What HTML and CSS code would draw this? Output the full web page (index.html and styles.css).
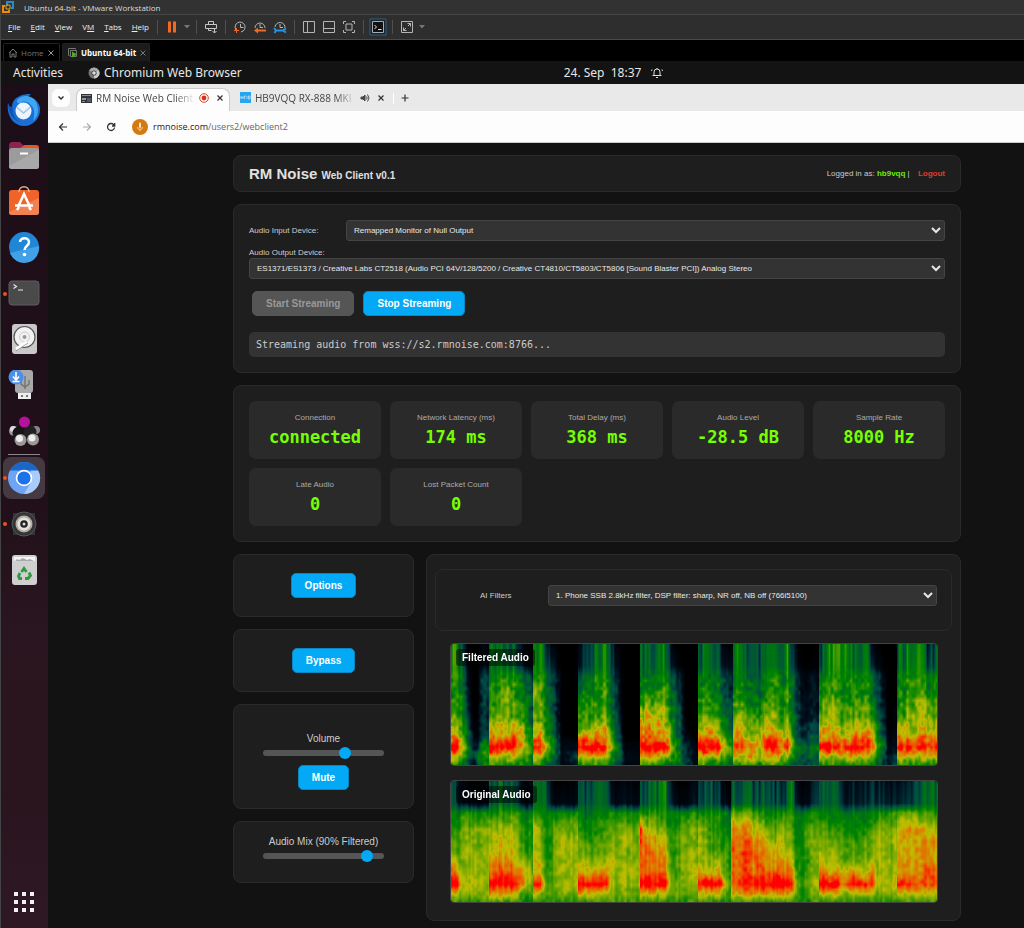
FILE: index.html
```html
<!DOCTYPE html>
<html lang="en">
<head>
    <meta charset="UTF-8">
    <meta name="viewport" content="width=device-width, initial-scale=1">
    <title>RM Noise Web Client</title>
    <link rel="stylesheet" href="styles.css">
</head>
<body>

<div class="vm-window">

    <!-- VMware title, menu and tabs -->
    <div class="vm-title">
        <svg width="12" height="12" viewBox="0 0 12 12" fill="none" stroke-width="2">
            <path d="M5 5V1h6v6H9" stroke="#1a8fd1"/>
            <path d="M3 5H1v6h6V9" stroke="#f38b00"/>
            <path d="M4 4h4v4H4z" stroke="#e0a030" stroke-width="1"/>
        </svg>
        <span>Ubuntu 64-bit - VMware Workstation</span>
    </div>

    <div class="vm-toolbar">
        <nav class="vm-menu">
            <button><u>F</u>ile</button>
            <button><u>E</u>dit</button>
            <button><u>V</u>iew</button>
            <button>V<u>M</u></button>
            <button><u>T</u>abs</button>
            <button><u>H</u>elp</button>
        </nav>
        <span class="sep"></span>
        <button class="tool" aria-label="Pause"><svg width="14" height="14" viewBox="0 0 14 14"><path d="M3 1.500h3v11H3zM8 1.500h3v11H8z" fill="#f26a21"/></svg></button>
        <button class="caret" aria-label="Power menu"><svg width="6" height="4" viewBox="0 0 6 4"><path d="M0 0h6L3 3.500z" fill="#777"/></svg></button>
        <span class="sep"></span>
        <button class="tool" aria-label="Send keys"><svg width="14" height="14" viewBox="0 0 14 14" fill="none" stroke="#c8c8c8"><path d="M4.500 1.500h5v3h-5zM1.500 4.500h11v4h-11zM4.500 8.500v2h3M10.500 8v5M8.500 11l2 2 2-2"/></svg></button>
        <span class="sep"></span>
        <button class="tool" aria-label="Take snapshot"><svg width="14" height="14" viewBox="0 0 14 14" fill="none" stroke="#b4b4b4"><path d="M3 10a5 5 0 1 1 5 2M7.500 4v3.500h3"/><path d="M1 10.500h5M3.500 8v5" stroke="#f26a21"/></svg></button>
        <button class="tool" aria-label="Revert snapshot"><svg width="14" height="14" viewBox="0 0 14 14" fill="none" stroke="#b4b4b4"><path d="M2 8a5 5 0 1 1 10 0M7 4v3.500h3"/><path d="M13 10.500H4" stroke="#f26a21" stroke-width="2"/><path d="M1 10.500L5 7.500v6z" fill="#f26a21" stroke="none"/></svg></button>
        <button class="tool" aria-label="Manage snapshots"><svg width="14" height="14" viewBox="0 0 14 14" fill="none" stroke="#b4b4b4"><path d="M2 7a5 5 0 1 1 10 1M7 4v3.500h3"/><path d="M1 8l2 2.500L1.500 13M3 10.500h7M13 8.500l-3 2 3 2" stroke="#2196e8" stroke-width="2"/></svg></button>
        <span class="sep"></span>
        <button class="tool" aria-label="Library"><svg width="14" height="14" viewBox="0 0 14 14" fill="none" stroke="#b4b4b4"><path d="M1.500 1.500h11v11h-11zM5.500 1.500v11"/></svg></button>
        <button class="tool" aria-label="Thumbnail bar"><svg width="14" height="14" viewBox="0 0 14 14" fill="none" stroke="#b4b4b4"><path d="M1.500 1.500h11v11h-11zM1.500 8.500h11"/></svg></button>
        <button class="tool" aria-label="Stretch guest"><svg width="14" height="14" viewBox="0 0 14 14" fill="none" stroke="#b4b4b4"><path d="M4 4h6v6H4zM1.500 4V1.500H4M10 1.500h2.500V4M12.500 10v2.500H10M4 12.500H1.500V10"/></svg></button>
        <span class="sep"></span>
        <button class="tool" aria-label="Console view"><svg width="18" height="18" viewBox="0 0 18 18" fill="none" stroke="#e0e0e0"><path d="M1 1h16v16H1z" fill="#1c252c" stroke="#2a5f87"/><path d="M3.500 3.500h11v11h-11z" fill="#111" stroke="#aaa"/><path d="M5.500 7l2 2-2 2M9 11.500h3.500"/></svg></button>
        <span class="sep"></span>
        <button class="tool" aria-label="Full screen"><svg width="14" height="14" viewBox="0 0 14 14" fill="none" stroke="#b4b4b4"><path d="M1.500 1.500h11v11h-11zM7.500 3.500h3v3M10.500 3.500L8 6M6.500 10.500h-3v-3M3.500 10.500L6 8"/></svg></button>
        <button class="caret" aria-label="Screen menu"><svg width="6" height="4" viewBox="0 0 6 4"><path d="M0 0h6L3 3.500z" fill="#777"/></svg></button>
    </div>

    <div class="vm-tabs">
        <div class="vm-tab">
            <svg width="10" height="10" viewBox="0 0 10 10" fill="none" stroke="#777"><path d="M1 5l4-4 4 4M2 4v5h2V6h2v3h2V4"/></svg>
            <span>Home</span>
            <button aria-label="Close Home"><svg width="8" height="8" viewBox="0 0 8 8" stroke="#999"><path d="M1.500 1.500l5 5M6.500 1.500l-5 5"/></svg></button>
        </div>
        <div class="vm-tab active">
            <svg width="11" height="11" viewBox="0 0 11 11" fill="none" stroke="#777"><path d="M2.500 8.500h-1v-7h7v1M3.500 3.500h6v6h-6z"/><path d="M5 4.500v6l5-3z" fill="#4faf1c" stroke="none"/></svg>
            <span>Ubuntu 64-bit</span>
            <button aria-label="Close Ubuntu 64-bit"><svg width="8" height="8" viewBox="0 0 8 8" stroke="#777"><path d="M1.500 1.500l5 5M6.500 1.500l-5 5"/></svg></button>
        </div>
    </div>

    <!-- GNOME top bar -->
    <div class="gnome-bar">
        <button>Activities</button>
        <button class="app-name">
            <svg width="12" height="12" viewBox="0 0 12 12"><circle cx="6" cy="6" r="5.500" fill="#777"/><path d="M6 6L1.200 3.200A5.500 5.500 0 0 1 10.800 3.200z" fill="#aaa"/><path d="M6 6l4.800-2.800A5.500 5.500 0 0 1 6 11.500z" fill="#ccc"/><circle cx="6" cy="6" r="2.600" fill="#444"/><circle cx="6" cy="6" r="1.800" fill="#ddd"/></svg>
            Chromium Web Browser
        </button>
        <button class="clock">
            24. Sep&nbsp; 18:37
            <svg width="12" height="12" viewBox="0 0 12 12" fill="none" stroke="#ddd"><path d="M3 8.500V5a3 3 0 0 1 6 0v3.500M1.500 8.500h9M5 10.500h2M6 2V1M1 2.500L0.500 4M11 2.500l.5 1.500"/></svg>
        </button>
    </div>

    <div class="desktop">

        <nav class="dock">
            <button aria-label="Thunderbird"><svg width="34" height="34" viewBox="0 0 34 34"><path d="M1 10c1 3 2 4 4 4 0-4 2-8 6-10 5-3 9-3 13-3-1 1-2 1-2 3 6 1 10 5 11 11 1 9-6 18-16 18C7 33-1 23 1 10z" fill="#1a6fd6"/><path d="M10 7c5-6 15-5 19 2 3 6 3 14-3 19 2-6 2-13-3-17-4-3-7-3-9-1-2 1-5 0-4-3z" fill="#3fa7f2"/><path d="M1 10c0 10 5 18 15 20-8-2-11-9-10-16-3 1-4-1-5-4z" fill="#0f55b0"/><ellipse cx="16.500" cy="18" rx="8" ry="8.500" fill="#eef4fb"/><path d="M9.500 14l7 6 7-6" fill="none" stroke="#9fc3ea" stroke-width="1.500"/></svg></button>
            <button aria-label="Files"><svg width="32" height="32" viewBox="0 0 32 32"><path d="M1 6q0-4 3-4h8l3 3h13q3 0 3 3v8H1z" fill="#8e2350"/><path d="M12 8l5-3h11q3 0 3 3v6H12z" fill="#e2562a"/><rect x="1" y="8" width="30" height="21" rx="3" fill="#9b9b9b"/><path d="M1 26L31 10v16q0 3-3 3H4q-3 0-3-3z" fill="#a8a8a8"/><path d="M12 13.500h8" stroke="#fff" stroke-width="2"/></svg></button>
            <button aria-label="Software"><svg width="32" height="32" viewBox="0 0 32 32"><rect x="1" y="4" width="30" height="25" rx="3" fill="#f0642a"/><path d="M1 26L31 12v14q0 3-3 3H4q-3 0-3-3z" fill="#f28252"/><path d="M10 21l6-13 6 13M7 19.500h18M9 24l2-3M23 24l-2-3" fill="none" stroke="#fff" stroke-width="2.500"/><path d="M11 6c0-7 10-7 10 0" fill="none" stroke="#d8bd90" stroke-width="1.500"/></svg></button>
            <button aria-label="Help"><svg width="32" height="32" viewBox="0 0 32 32"><circle cx="16" cy="15" r="15" fill="#2186d6"/><path d="M2 21L31 14a15 15 0 0 1-29 7z" fill="#42a1e6"/><path d="M12 10c0-5 9-5 9 0 0 4-4.500 4-4.500 8" fill="none" stroke="#fff" stroke-width="2.500"/><circle cx="16.500" cy="22.500" r="1.800" fill="#fff"/></svg></button>
            <button class="running" aria-label="Terminal"><svg width="32" height="32" viewBox="0 0 32 32"><rect x="1" y="3" width="30" height="24" rx="3" fill="#4a4a4a" stroke="#5c5c5c"/><path d="M5.500 6.500l3 2-3 2M10 12h5" fill="none" stroke="#e8e8e8" stroke-width="1.200"/></svg></button>
            <button aria-label="Disks"><svg width="32" height="32" viewBox="0 0 32 32"><rect x="4" y="0" width="25" height="30" rx="3" fill="#c9c9c9"/><circle cx="16.500" cy="13" r="10.500" fill="#f2f2f2" stroke="#555" stroke-width="1.200"/><circle cx="16.500" cy="13" r="5" fill="none" stroke="#ccc"/><circle cx="16.500" cy="13" r="2" fill="#999"/><path d="M8 25l11-7" stroke="#fff" stroke-width="3"/><path d="M8 27l12-8" stroke="#888" stroke-width=".7"/></svg></button>
            <button aria-label="Startup disk creator"><svg width="32" height="32" viewBox="0 0 32 32"><rect x="7" y="0" width="18" height="23" rx="3" fill="#a9a9a9"/><path d="M10 23h13v6H10z" fill="#eee"/><path d="M13 25h2v2h-2zM18 25h2v2h-2z" fill="#777"/><path d="M17 6v13M13 11v3l4 3 4-3v-4" fill="none" stroke="#777" stroke-width="1.500"/><circle cx="8" cy="7" r="7.500" fill="#4b8fe8"/><path d="M8 2v7M5 6.500L8 10l3-3.500M4.500 11.500h7" fill="none" stroke="#fff" stroke-width="1.600"/></svg></button>
            <button aria-label="Molecules"><svg width="32" height="32" viewBox="0 0 32 32"><circle cx="6" cy="15" r="5" fill="#999"/><circle cx="5" cy="13" r="3" fill="#ddd"/><circle cx="28" cy="14" r="4" fill="#888"/><circle cx="11" cy="17" r="6.500" fill="#141414"/><circle cx="22" cy="16" r="6.500" fill="#202020"/><circle cx="16.500" cy="6" r="5.500" fill="#b5139c"/><circle cx="12.500" cy="24" r="6" fill="#999"/><circle cx="11.500" cy="22.500" r="3.500" fill="#eee"/><circle cx="25" cy="23.500" r="6" fill="#999"/><circle cx="24" cy="22" r="3.500" fill="#eee"/></svg></button>
            <hr>
            <button class="running active" aria-label="Chromium"><svg width="34" height="34" viewBox="0 0 34 34"><circle cx="17" cy="17" r="16" fill="#6ea3f5"/><path d="M3.100 9A16 16 0 0 1 30.900 9H17z" fill="#1a66c9"/><path d="M30.900 9A16 16 0 0 1 17 33l7-12V9z" fill="#a9ccfa"/><path d="M3.100 9h28" stroke="#1a66c9"/><circle cx="17" cy="17" r="8.300" fill="#fff"/><circle cx="17" cy="17" r="6.600" fill="#1a73e8"/></svg></button>
            <button class="running" aria-label="Audio"><svg width="32" height="32" viewBox="0 0 32 32"><path d="M5 5h22v22H5z" fill="#333"/><circle cx="16" cy="16" r="12" fill="#353535" stroke="#50585c"/><circle cx="16" cy="16" r="8.500" fill="#b5b0a8"/><circle cx="16" cy="16" r="6.500" fill="#e6e3dd"/><circle cx="16" cy="16" r="3.800" fill="#222"/><circle cx="16" cy="16" r="1.500" fill="#ddd"/></svg></button>
            <button aria-label="Trash"><svg width="32" height="32" viewBox="0 0 32 32"><rect x="4" y="1" width="25" height="30" rx="3" fill="#cfcfcf"/><path d="M6 3h21v4H6z" fill="#f4f4f4"/><path d="M7 7l2-2 2 1 4-2 4 2 3-1 4 2z" fill="#aaa"/><g fill="none" stroke="#2f9a3c" stroke-width="2.800"><path d="M13.500 18l2.500-3.500 2.500 3.500M21 18.500l1.500 3-2.500 3h-3M14 24.500h-2.500L10.500 22l1.500-3"/></g></svg></button>
            <button class="apps" aria-label="Show applications"><svg width="22" height="22" viewBox="0 0 22 22" fill="#f2f2f2"><path d="M1 1h4v4H1zM9 1h4v4H9zM17 1h4v4h-4zM1 9h4v4H1zM9 9h4v4H9zM17 9h4v4h-4zM1 17h4v4H1zM9 17h4v4H9zM17 17h4v4h-4z"/></svg></button>
        </nav>

        <div class="browser">
            <div class="tab-strip">
                <button class="tab-search" aria-label="Search tabs"><svg width="8" height="8" viewBox="0 0 8 8" fill="none" stroke="#333" stroke-width="1.500"><path d="M1.500 2.500L4 5l2.500-2.500"/></svg></button>
                <div class="tab active">
                    <svg width="11" height="11" viewBox="0 0 11 11"><path d="M0 1h11v9H0z" fill="#30343a"/><path d="M1 2h9v1H1z" fill="#8a8f96"/><path d="M1 5h4v2H1z" fill="#999"/><path d="M6 5h4v4H6z" fill="#555b63"/><path d="M1 8h3v1H1z" fill="#4aa0d8"/></svg>
                    <span class="tab-name">RM Noise Web Client</span>
                    <svg width="10" height="10" viewBox="0 0 10 10"><circle cx="5" cy="5" r="4.300" fill="none" stroke="#d9431e"/><circle cx="5" cy="5" r="2.400" fill="#d9301e"/></svg>
                    <button aria-label="Close tab"><svg width="8" height="8" viewBox="0 0 8 8" stroke="#333" stroke-width="1.200"><path d="M1.500 1.500l5 5M6.500 1.500l-5 5"/></svg></button>
                </div>
                <div class="tab">
                    <svg width="11" height="11" viewBox="0 0 11 11"><path d="M0 0h11v11H0z" fill="#27a5ee"/><path d="M1 4v3M3 4v3M1 5.500h2M4.500 7V4h1.500M7 4v3M8.500 4h1.500v3H8.500z" fill="none" stroke="#cdeafd" stroke-width=".7"/></svg>
                    <span class="tab-name">HB9VQQ RX-888 MKI</span>
                    <svg width="10" height="10" viewBox="0 0 10 10" fill="none" stroke="#444"><path d="M1 4h2l2-2v6L3 6H1z" fill="#444"/><path d="M6.500 3.500q1.500 1.500 0 3M7.500 1.500q3 3.500 0 7"/></svg>
                    <button aria-label="Close tab"><svg width="8" height="8" viewBox="0 0 8 8" stroke="#333" stroke-width="1.200"><path d="M1.500 1.500l5 5M6.500 1.500l-5 5"/></svg></button>
                </div>
                <span class="tab-divider"></span>
                <button class="new-tab" aria-label="New tab"><svg width="8" height="8" viewBox="0 0 8 8" stroke="#333" stroke-width="1.200"><path d="M4 .5v7M.5 4h7"/></svg></button>
            </div>

            <div class="address-bar">
                <button aria-label="Back"><svg width="10" height="10" viewBox="0 0 10 10" fill="none" stroke="#333" stroke-width="1.200"><path d="M9 5H1.500M5 1.500L1.500 5 5 8.500"/></svg></button>
                <button aria-label="Forward"><svg width="10" height="10" viewBox="0 0 10 10" fill="none" stroke="#aaa" stroke-width="1.200"><path d="M1 5h7.500M5 1.500L8.500 5 5 8.500"/></svg></button>
                <button aria-label="Reload"><svg width="10" height="10" viewBox="0 0 10 10" fill="none" stroke="#333" stroke-width="1.300"><path d="M8.500 5.500A3.500 3.500 0 1 1 7.500 2.500L8.700 3.700M8.700 1v3H6"/></svg></button>
                <button class="mic" aria-label="Microphone in use"><svg width="16" height="16" viewBox="0 0 16 16"><circle cx="8" cy="8" r="8" fill="#d47a12"/><path d="M8 4.500V8" stroke="#fbe3c2" stroke-width="2" stroke-linecap="round"/><path d="M5.500 8a2.500 2.500 0 0 0 5 0M8 10.500V12" fill="none" stroke="#fbe3c2" stroke-width=".8"/></svg></button>
                <span class="url"><b>rmnoise.com</b>/users2/webclient2</span>
            </div>

            <!-- the web client itself -->
            <main class="page">
                <header class="card page-header">
                    <h1>RM Noise <small>Web Client v0.1</small></h1>
                    <p>Logged in as: <strong>hb9vqq</strong> | <a href="#">Logout</a></p>
                </header>

                <section class="card devices">
                    <div class="device-row">
                        <label for="inputDevice">Audio Input Device:</label>
                        <select id="inputDevice"><option>Remapped Monitor of Null Output</option></select>
                    </div>
                    <label for="outputDevice">Audio Output Device:</label>
                    <select id="outputDevice"><option>ES1371/ES1373 / Creative Labs CT2518 (Audio PCI 64V/128/5200 / Creative CT4810/CT5803/CT5806 [Sound Blaster PCI]) Analog Stereo</option></select>
                    <div class="stream-buttons">
                        <button class="btn" disabled>Start Streaming</button>
                        <button class="btn">Stop Streaming</button>
                    </div>
                    <div class="status">Streaming audio from wss://s2.rmnoise.com:8766...</div>
                </section>

                <section class="card stats">
                    <div class="stat"><span>Connection</span><b>connected</b></div>
                    <div class="stat"><span>Network Latency (ms)</span><b>174 ms</b></div>
                    <div class="stat"><span>Total Delay (ms)</span><b>368 ms</b></div>
                    <div class="stat"><span>Audio Level</span><b>-28.5 dB</b></div>
                    <div class="stat"><span>Sample Rate</span><b>8000 Hz</b></div>
                    <div class="stat"><span>Late Audio</span><b>0</b></div>
                    <div class="stat"><span>Lost Packet Count</span><b>0</b></div>
                </section>

                <div class="columns">
                    <div class="controls">
                        <section class="card"><button class="btn">Options</button></section>
                        <section class="card"><button class="btn">Bypass</button></section>
                        <section class="card volume">
                            <label for="volume">Volume</label>
                            <input type="range" id="volume" min="0" max="100" value="70">
                            <button class="btn">Mute</button>
                        </section>
                        <section class="card mix">
                            <label for="mix">Audio Mix (90% Filtered)</label>
                            <input type="range" id="mix" min="0" max="100" value="90">
                        </section>
                    </div>

                    <section class="card audio">
                        <div class="card filters">
                            <label for="filter">AI Filters</label>
                            <select id="filter"><option>1. Phone SSB 2.8kHz filter, DSP filter: sharp, NR off, NB off (766i5100)</option></select>
                        </div>
                        <div class="spectrum">
                            <canvas id="filtered" width="486" height="121"></canvas>
                            <h2>Filtered Audio</h2>
                        </div>
                        <div class="spectrum">
                            <canvas id="original" width="486" height="121"></canvas>
                            <h2>Original Audio</h2>
                        </div>
                    </section>
                </div>
            </main>
        </div>
    </div>
</div>

<script src="spectrum.js"></script>
</body>
</html>
```

FILE: styles.css
```css
* {
    box-sizing: border-box;
}

body {
    margin: 0;
    background-color: #121212;
    color: #ccc;
    font-family: "Liberation Sans", Arial, sans-serif;
    font-size: 8px;
}

button {
    padding: 0;
    border: 0;
    background: none;
    color: inherit;
    font: inherit;
}

svg {
    display: block;
    flex: none;
}

.vm-window {
    display: flex;
    flex-direction: column;
    min-height: 100vh;
    border-left: 1px solid #444;
    font-family: "Open Sans", "Noto Sans", sans-serif;
}

.vm-title {
    display: flex;
    align-items: center;
    gap: 10px;
    height: 15px;
    padding-left: 1px;
    border-bottom: 1px solid #484848;
    background-color: #323232;
    color: #ddd;
}

.vm-toolbar {
    display: flex;
    align-items: center;
    height: 25px;
    border-bottom: 1px solid #4a4a4a;
    background-color: #2e2e2e;
}

.vm-menu {
    display: flex;
    justify-content: space-between;
    width: 152px;
    padding: 0 4px 1px 7px;
    color: #eee;
}

.sep {
    width: 1px;
    height: 14px;
    margin: 0 4px;
    background-color: #505050;
}

.tool, .caret {
    display: flex;
    align-items: center;
    justify-content: center;
    width: 20px;
    height: 20px;
}

.caret {
    width: 10px;
}

.vm-tabs {
    display: flex;
    align-items: flex-end;
    gap: 2px;
    height: 21px;
    padding-left: 2px;
    background-color: #000;
}

.vm-tab {
    display: flex;
    align-items: center;
    gap: 3px;
    width: 57px;
    height: 18px;
    padding: 0 4px;
    border: 1px solid #222;
    border-bottom: 0;
    border-radius: 2px 2px 0 0;
    color: #777;
    white-space: nowrap;
}

.vm-tab button {
    margin-left: auto;
}

.vm-tab.active {
    width: 88px;
    background-color: #1c1c1c;
    color: #fff;
    font-weight: bold;
}

.gnome-bar {
    display: flex;
    align-items: center;
    height: 23px;
    padding-left: 12px;
    background-color: #131313;
    color: #e6e6e6;
    font-family: "Noto Sans", sans-serif;
    font-size: 12px;
}

.app-name, .clock {
    display: flex;
    align-items: center;
    gap: 4px;
    margin-left: 25px;
}

.clock {
    gap: 10px;
    margin-left: 322px;
}

.desktop {
    display: flex;
    flex: 1;
}

/* dock */
.dock {
    display: flex;
    flex-direction: column;
    width: 47px;
    padding: 3px 0;
    background: linear-gradient(#1c0e18, #211019 50%, #2a1620 65%, #2a151f 85%, #2e1824);
}

.dock button {
    position: relative;
    display: flex;
    align-items: center;
    justify-content: center;
    width: 46px;
    height: 46px;
}

.dock hr {
    width: 32px;
    height: 1px;
    margin: -1px auto 0 7px;
    border: 0;
    background-color: #8d868a;
}

.dock .active {
    border: 2px solid transparent;
    border-radius: 10px;
    background-color: #463a42;
    background-clip: padding-box;
}

.dock .running::before {
    content: "";
    position: absolute;
    left: 2px;
    width: 4px;
    height: 4px;
    border-radius: 50%;
    background-color: #e95420;
}

.dock .active::before {
    left: 0;
}

.dock .apps {
    margin-top: auto;
}

/* browser */
.browser {
    flex: 1;
    min-width: 0;
    background-color: #121212;
}

.tab-strip {
    display: flex;
    align-items: flex-end;
    height: 27px;
    padding-left: 4px;
    background-color: #e9e9e9;
    color: #444;
    font-size: 10px;
}

.tab-search {
    display: flex;
    align-items: center;
    justify-content: center;
    width: 18px;
    height: 18px;
    margin: 0 6px 4px 0;
    border-radius: 6px;
    background-color: #fdfdfd;
}

.tab {
    display: flex;
    align-items: center;
    gap: 4px;
    width: 154px;
    height: 23px;
    padding: 0 5px 4px 4px;
}

.tab + .tab {
    margin-left: 6px;
}

.tab.active {
    border: 1px solid #ccc;
    border-bottom: 0;
    border-radius: 8px 8px 0 0;
    background-color: #fdfdfd;
}

.tab-name {
    flex: 1;
    white-space: nowrap;
    -webkit-mask-image: linear-gradient(to right, #000 80%, transparent);
    mask-image: linear-gradient(to right, #000 80%, transparent);
}

.tab button {
    margin-left: 3px;
}

.tab-divider {
    width: 1px;
    height: 11px;
    margin: 0 7px 7px 3px;
    background-color: #fff;
}

.new-tab {
    margin-bottom: 9px;
}

.address-bar {
    display: flex;
    align-items: center;
    gap: 14px;
    height: 32px;
    padding-left: 10px;
    border-bottom: 1px solid #ccc;
    background-color: #fdfdfd;
    color: #666;
    font-size: 9px;
}

.address-bar b {
    color: #222;
    font-weight: normal;
}

.mic {
    margin-left: 2px;
}

.url {
    margin-left: -9px;
}

/* web client */
.page {
    display: flex;
    flex-direction: column;
    gap: 12px;
    margin: 12px 63px 7px 185px;
    font-family: "Liberation Sans", Arial, sans-serif;
}

.card {
    border: 1px solid #2a2a2a;
    border-radius: 8px;
    background-color: #1e1e1e;
}

.page-header {
    display: flex;
    align-items: center;
    justify-content: space-between;
    height: 37px;
    padding: 0 15px;
}

.page-header h1 {
    margin: 0;
    color: #e0e0e0;
    font-size: 15px;
}

.page-header small {
    font-size: 10px;
}

.page-header p {
    margin: 0;
}

.page-header strong {
    color: #6aec00;
}

.page-header a {
    margin-left: 6px;
    color: #e03a28;
    font-weight: bold;
    text-decoration: none;
}

.devices {
    padding: 15px;
    line-height: 10px;
}

.device-row {
    display: flex;
    align-items: center;
    margin-bottom: 7px;
}

.device-row label {
    width: 97px;
}

select {
    display: block;
    width: 100%;
    height: 21px;
    padding: 0 0 0 3px;
    border: 1px solid #444;
    border-radius: 3px;
    background-color: #333;
    color: #e8e8e8;
    font: inherit;
}

.device-row select {
    flex: 1;
}

.stream-buttons {
    display: flex;
    gap: 9px;
    margin: 12px 3px 16px;
}

.btn {
    height: 25px;
    padding: 0 13px;
    border: 1px solid #0a86c2;
    border-radius: 5px;
    background-color: #03a9f4;
    color: #fff;
    font-size: 10px;
    font-weight: bold;
}

.btn:disabled {
    border-color: #555;
    background-color: #555;
    color: #999;
}

.status {
    height: 25px;
    padding: 0 7px;
    border-radius: 5px;
    background-color: #333;
    font-family: "DejaVu Sans Mono", monospace;
    font-size: 10px;
    line-height: 25px;
}

.stats {
    display: grid;
    grid-template-columns: repeat(5, 1fr);
    gap: 9px;
    padding: 15px;
}

.stat {
    display: flex;
    flex-direction: column;
    align-items: center;
    height: 58px;
    padding-top: 11px;
    border-radius: 7px;
    background-color: #2a2a2a;
    color: #aaa;
    line-height: 11px;
}

.stat b {
    margin-top: 4px;
    color: #76ff03;
    font-family: "DejaVu Sans Mono", monospace;
    font-size: 17px;
    line-height: 20px;
}

.columns {
    display: flex;
    align-items: flex-start;
    gap: 12px;
}

.controls {
    display: flex;
    flex: none;
    flex-direction: column;
    gap: 12px;
    width: 181px;
    font-size: 10px;
}

.controls .card {
    display: flex;
    flex-direction: column;
    align-items: center;
    padding: 18px 0;
}

.controls .volume {
    padding-top: 28px;
}

.controls .mix {
    padding: 14px 0;
}

input[type="range"] {
    appearance: none;
    -webkit-appearance: none;
    width: 121px;
    height: 6px;
    margin: 6px 0 9px;
    border-radius: 3px;
    background-color: #555;
}

input[type="range"]::-webkit-slider-thumb {
    -webkit-appearance: none;
    width: 12px;
    height: 12px;
    border-radius: 50%;
    background-color: #03a9f4;
}

.audio {
    flex: 1;
    min-width: 0;
    padding: 14px 8px 17px;
}

.filters {
    display: flex;
    align-items: center;
    height: 62px;
    padding: 0 14px 9px 44px;
}

.filters label {
    width: 68px;
}

.filters select {
    flex: 1;
}

.spectrum {
    position: relative;
    height: 123px;
    margin: 12px 14px 0 15px;
    border: 1px solid #444;
    border-radius: 4px;
    overflow: hidden;
}

.spectrum + .spectrum {
    margin-top: 14px;
}

.spectrum canvas {
    display: block;
    width: 100%;
    height: 100%;
}

.spectrum h2 {
    position: absolute;
    top: 5px;
    left: 5px;
    margin: 0;
    padding: 3px 6px;
    border-radius: 3px;
    background-color: rgba(0, 0, 0, 0.5);
    color: #fff;
    font-size: 10px;
}
```

FILE: spectrum.js
```js
// depth of each level in a column, top to bottom
const ROWS = [0, 0.18, 0.26, 0.4, 0.6, 0.75, 0.85, 0.93, 1];

// x position, then signal levels (0-100) at each of ROWS
const FILTERED = [
    [0, 50, 50, 50, 52, 70, 85, 100, 76, 55],
    [6, 45, 48, 50, 52, 64, 80, 100, 70, 50],
    [12, 20, 30, 38, 45, 50, 58, 72, 52, 40],
    [17, 0, 4, 10, 20, 30, 40, 48, 38, 28],
    [22, 0, 0, 0, 2, 5, 12, 20, 22, 10],
    [26, 0, 0, 0, 2, 5, 10, 20, 40, 30],
    [30, 5, 10, 25, 28, 26, 28, 48, 50, 45],
    [37, 5, 12, 25, 30, 30, 30, 50, 52, 50],
    [38, 38, 36, 42, 52, 64, 84, 100, 78, 55],
    [48, 45, 46, 50, 60, 74, 88, 100, 74, 55],
    [54, 40, 45, 52, 74, 70, 84, 100, 70, 55],
    [64, 35, 38, 52, 60, 68, 88, 96, 70, 52],
    [71, 8, 20, 42, 50, 62, 84, 82, 62, 48],
    [77, 0, 6, 28, 40, 46, 60, 60, 50, 36],
    [81, 0, 2, 20, 30, 34, 48, 50, 42, 35],
    [82, 45, 48, 50, 68, 66, 80, 100, 76, 58],
    [89, 52, 52, 54, 68, 66, 86, 100, 74, 55],
    [94, 30, 38, 46, 50, 54, 64, 78, 54, 40],
    [100, 5, 18, 28, 38, 44, 50, 54, 46, 32],
    [107, 0, 4, 14, 18, 20, 24, 34, 32, 20],
    [111, 0, 0, 0, 0, 2, 5, 8, 10, 5],
    [126, 0, 0, 0, 0, 0, 4, 10, 25, 20],
    [127, 10, 14, 35, 45, 62, 82, 100, 76, 55],
    [138, 35, 36, 42, 56, 60, 80, 100, 74, 52],
    [147, 38, 40, 48, 52, 62, 84, 98, 74, 55],
    [154, 52, 52, 54, 66, 72, 84, 100, 72, 55],
    [159, 34, 36, 40, 46, 52, 62, 76, 58, 46],
    [165, 5, 12, 24, 32, 36, 42, 48, 42, 34],
    [170, 0, 0, 2, 6, 12, 20, 28, 25, 20],
    [174, 0, 0, 0, 0, 0, 0, 5, 8, 5],
    [188, 0, 0, 0, 0, 0, 2, 6, 8, 5],
    [189, 34, 34, 40, 52, 76, 88, 100, 76, 55],
    [196, 38, 38, 42, 55, 84, 92, 98, 74, 55],
    [203, 35, 38, 42, 52, 74, 90, 100, 72, 54],
    [213, 48, 48, 50, 66, 76, 80, 98, 70, 52],
    [218, 25, 30, 40, 50, 54, 72, 88, 62, 46],
    [222, 0, 10, 28, 38, 44, 48, 52, 48, 42],
    [229, 0, 2, 20, 28, 32, 40, 42, 46, 40],
    [234, 0, 0, 0, 2, 5, 12, 24, 28, 30],
    [246, 0, 0, 0, 0, 0, 0, 5, 8, 10],
    [247, 36, 36, 44, 58, 64, 80, 98, 74, 54],
    [258, 45, 45, 45, 54, 72, 86, 100, 72, 52],
    [266, 36, 38, 44, 52, 66, 80, 98, 70, 52],
    [272, 5, 12, 28, 38, 46, 60, 78, 56, 44],
    [281, 0, 10, 18, 28, 32, 42, 50, 42, 34],
    [282, 38, 38, 42, 50, 66, 82, 86, 70, 52],
    [290, 48, 48, 50, 52, 76, 82, 92, 70, 54],
    [299, 28, 30, 36, 46, 56, 68, 84, 76, 52],
    [309, 30, 30, 34, 42, 56, 72, 74, 66, 50],
    [313, 45, 44, 48, 54, 76, 84, 96, 72, 56],
    [325, 38, 40, 54, 60, 70, 88, 96, 72, 54],
    [332, 28, 30, 36, 46, 55, 70, 80, 64, 50],
    [336, 50, 50, 52, 62, 66, 80, 96, 68, 52],
    [341, 25, 30, 38, 46, 50, 58, 66, 52, 42],
    [347, 0, 4, 16, 22, 26, 32, 38, 34, 28],
    [354, 0, 0, 4, 12, 18, 28, 34, 28, 20],
    [360, 0, 2, 14, 18, 24, 40, 54, 42, 34],
    [367, 0, 2, 10, 16, 22, 34, 48, 42, 40],
    [368, 25, 28, 40, 52, 66, 82, 100, 74, 54],
    [380, 50, 50, 52, 62, 76, 84, 100, 72, 54],
    [391, 48, 48, 50, 52, 62, 76, 90, 72, 54],
    [403, 42, 42, 50, 62, 70, 86, 100, 72, 54],
    [414, 46, 46, 50, 58, 68, 84, 100, 72, 54],
    [421, 10, 25, 44, 50, 56, 84, 92, 64, 48],
    [427, 0, 8, 26, 34, 38, 50, 58, 46, 36],
    [433, 0, 0, 6, 14, 22, 28, 34, 30, 24],
    [437, 0, 0, 0, 0, 2, 6, 10, 14, 18],
    [445, 0, 0, 0, 5, 10, 10, 12, 24, 25],
    [446, 36, 36, 42, 50, 62, 82, 98, 74, 54],
    [458, 48, 50, 52, 58, 72, 84, 98, 72, 54],
    [468, 48, 50, 52, 68, 74, 80, 96, 72, 54],
    [478, 18, 25, 44, 54, 74, 84, 90, 70, 52],
    [487, 38, 38, 44, 54, 68, 82, 94, 70, 54]
];

const ORIGINAL = [
    [0, 30, 30, 44, 50, 68, 84, 100, 72, 55],
    [6, 15, 20, 44, 52, 62, 78, 98, 70, 54],
    [11, 5, 12, 52, 63, 65, 67, 70, 64, 55],
    [22, 2, 6, 52, 65, 67, 69, 70, 66, 55],
    [37, 5, 8, 52, 65, 66, 69, 70, 64, 55],
    [38, 34, 36, 52, 66, 70, 86, 100, 76, 54],
    [50, 38, 38, 54, 72, 78, 88, 100, 76, 55],
    [64, 30, 34, 54, 72, 72, 84, 100, 72, 54],
    [71, 5, 10, 46, 54, 58, 78, 84, 60, 52],
    [81, 5, 10, 46, 52, 54, 62, 66, 56, 50],
    [82, 42, 42, 54, 80, 72, 78, 98, 76, 56],
    [89, 50, 50, 54, 72, 72, 84, 100, 72, 56],
    [94, 35, 38, 46, 52, 54, 58, 64, 58, 52],
    [101, 5, 10, 46, 54, 56, 60, 62, 60, 54],
    [103, 0, 6, 50, 66, 67, 68, 69, 64, 55],
    [126, 5, 8, 50, 65, 67, 69, 70, 64, 55],
    [127, 25, 28, 44, 54, 62, 78, 100, 78, 56],
    [138, 30, 34, 44, 52, 64, 78, 100, 76, 56],
    [147, 38, 38, 46, 52, 64, 76, 100, 72, 54],
    [155, 34, 36, 46, 56, 64, 76, 100, 70, 54],
    [160, 5, 10, 52, 65, 67, 69, 70, 64, 55],
    [188, 5, 10, 52, 65, 67, 68, 70, 64, 55],
    [189, 32, 34, 54, 94, 90, 88, 100, 78, 56],
    [196, 34, 36, 52, 74, 86, 92, 100, 78, 56],
    [206, 38, 38, 52, 66, 78, 88, 100, 72, 54],
    [214, 44, 44, 50, 62, 74, 82, 100, 70, 54],
    [220, 10, 15, 44, 50, 52, 56, 62, 58, 52],
    [227, 0, 6, 46, 54, 57, 62, 64, 62, 54],
    [232, 0, 6, 52, 64, 66, 68, 69, 64, 55],
    [246, 10, 14, 52, 65, 67, 69, 70, 64, 55],
    [247, 30, 32, 52, 74, 74, 76, 100, 78, 56],
    [260, 34, 36, 50, 58, 64, 78, 100, 72, 54],
    [270, 15, 20, 48, 54, 60, 74, 98, 72, 54],
    [275, 0, 6, 44, 50, 53, 56, 64, 60, 50],
    [279, 0, 6, 44, 50, 53, 56, 64, 60, 50],
    [280, 35, 38, 66, 82, 88, 86, 90, 78, 56],
    [294, 32, 36, 64, 84, 92, 90, 96, 80, 56],
    [306, 26, 30, 52, 72, 84, 90, 96, 80, 56],
    [318, 34, 36, 50, 62, 78, 88, 100, 80, 56],
    [332, 15, 20, 52, 66, 74, 88, 100, 80, 56],
    [340, 45, 46, 52, 60, 70, 82, 98, 74, 54],
    [346, 5, 12, 42, 46, 50, 54, 58, 54, 50],
    [352, 0, 6, 46, 51, 51, 53, 57, 55, 52],
    [358, 10, 14, 52, 60, 62, 65, 67, 63, 55],
    [367, 20, 24, 52, 62, 64, 67, 69, 63, 55],
    [368, 34, 34, 50, 60, 70, 84, 100, 74, 54],
    [382, 30, 32, 46, 54, 64, 76, 100, 72, 54],
    [390, 20, 24, 44, 52, 60, 72, 90, 70, 54],
    [400, 15, 18, 46, 52, 58, 78, 100, 72, 54],
    [414, 20, 24, 48, 54, 64, 74, 100, 72, 54],
    [421, 26, 30, 52, 60, 63, 82, 90, 68, 54],
    [426, 15, 20, 54, 65, 67, 68, 70, 66, 55],
    [445, 10, 15, 52, 65, 67, 68, 70, 66, 55],
    [446, 10, 15, 60, 75, 80, 76, 96, 72, 56],
    [458, 15, 20, 62, 78, 77, 80, 94, 72, 56],
    [468, 34, 36, 56, 81, 78, 84, 88, 74, 56],
    [478, 34, 36, 54, 74, 77, 87, 90, 74, 56],
    [487, 42, 42, 52, 76, 78, 85, 86, 72, 56]
];

// level -> colour
const COLORS = [
    [0, 0, 0, 0],
    [12, 0, 12, 26],
    [30, 0, 72, 68],
    [50, 0, 132, 0],
    [74, 190, 190, 0],
    [88, 236, 90, 0],
    [98, 255, 0, 0],
    [200, 255, 0, 0]
];

function hash(x, y) {
    const n = Math.sin(x * 127.1 + y * 311.7) * 43758.5453;
    return n - Math.floor(n);
}

function noise(x, y) {
    const ix = Math.floor(x), iy = Math.floor(y);
    const fx = x - ix, fy = y - iy;
    const a = hash(ix, iy) * (1 - fx) + hash(ix + 1, iy) * fx;
    const b = hash(ix, iy + 1) * (1 - fx) + hash(ix + 1, iy + 1) * fx;
    return a * (1 - fy) + b * fy - 0.5;
}

// linear interpolation between the rows of a table
function lookup(table, v) {
    let i = 1;
    while (i < table.length - 1 && table[i][0] < v) i++;
    const p = table[i - 1], q = table[i];
    const t = (v - p[0]) / (q[0] - p[0]);
    return p.slice(1).map((n, k) => n + (q[k + 1] - n) * t);
}

// streak strength and how far the middle is pulled down, by depth
const STREAK = [[0, 26], [0.15, 24], [0.3, 8], [1, 7]];
const DIP = [[0, 0], [0.28, 0], [0.4, 1], [0.74, 1], [0.84, 0], [1, 0]];

function draw(id, table, seed, dip, grain) {
    const canvas = document.getElementById(id);
    const ctx = canvas.getContext('2d');
    const w = canvas.width, h = canvas.height;
    const image = ctx.createImageData(w, h);

    for (let x = 0; x < w; x++) {
        const column = lookup(table, x);
        const rows = ROWS.map((r, i) => [r, column[i]]);
        const streak = noise(x / 2 + seed, 7);
        for (let y = 0; y < h; y++) {
            const d = y / h;
            let level = lookup(rows, d)[0];
            const amount = Math.min(1, level / 25);
            const fade = d < 0.2 ? 0 : Math.min(1, (d - 0.2) * 10);
            level -= lookup(DIP, d)[0] * dip;
            level += streak * lookup(STREAK, d)[0] * amount;
            level += (noise(x / 3 + seed, y / 4) * grain + noise(x / 7, y / 10 + seed) * 8) * amount * fade;
            const c = lookup(COLORS, Math.max(0, level));
            image.data.set([c[0], c[1], c[2], 255], (y * w + x) * 4);
        }
    }
    ctx.putImageData(image, 0, 0);
}

draw('filtered', FILTERED, 3, 5, 19);
draw('original', ORIGINAL, 90, 0, 11);
```
